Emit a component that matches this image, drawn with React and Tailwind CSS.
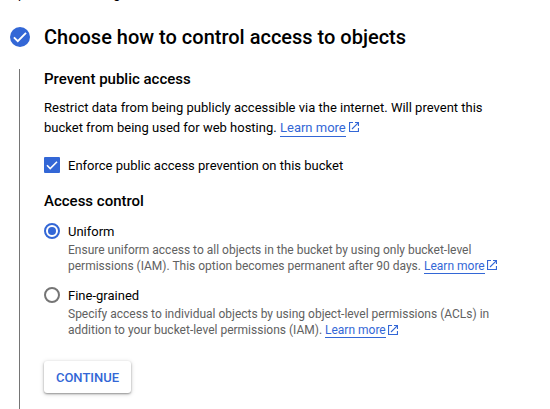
function OpenIcon({ className }) {
  return (
    <svg viewBox="0 0 10 10" className={`shrink-0 ${className}`} fill="none" stroke="#3367d6" strokeWidth="1.1">
      <path d="M4 .55H.55v8.9h8.9V6M6 .55h3.45V4M9.2.8 3 7" />
    </svg>
  );
}

function LearnMore({ className, iconClassName }) {
  return (
    <>
      <a className={`block border-b border-[#3367d6] text-[#3367d6] ${className}`}>Learn more</a>
      <OpenIcon className={iconClassName} />
    </>
  );
}

function Radio({ checked }) {
  return (
    <span className={`flex size-4 shrink-0 items-center justify-center rounded-full border-2 ${checked ? "border-[#3367d6]" : "border-[#757575]"}`}>
      {checked && <span className="size-2 rounded-full bg-[#3367d6]" />}
    </span>
  );
}

export default function App() {
  return (
    <div className="h-[409px] w-[550px] overflow-hidden bg-white font-['Roboto',sans-serif] text-[13px] whitespace-nowrap text-black">
      <div className="flex h-[26px] gap-[88px] overflow-hidden pl-[18px]">
        <span className="-mt-[14px] h-4 leading-4">p</span>
        <span className="-mt-[14px] h-4 leading-4">g</span>
      </div>
      <header className="flex h-[22px] items-center pl-[10px]">
        <svg viewBox="0 0 20 20" className="size-5">
          <circle cx="10" cy="10" r="10" fill="#3367d6" />
          <path d="m3.9 10.3 3.9 3.9 8.2-8.3" fill="none" stroke="white" strokeWidth="1.9" />
        </svg>
        <h1 className="ml-[14px] text-[20px] leading-[22px] font-medium">Choose how to control access to objects</h1>
      </header>
      <main className="mt-[21px] ml-[19px] h-[340px] border-l border-[#757575] pl-6">
        <h2 className="h-5 text-[15px] leading-5 font-medium">Prevent public access</h2>
        <p className="mt-[9px] h-5 leading-5">Restrict data from being publicly accessible via the internet. Will prevent this</p>
        <div className="flex h-5 items-start leading-5">
          <p className="w-[236px]">bucket from being used for web hosting.</p>
          <LearnMore className="h-[19px]" iconClassName="mt-[4px] ml-[3px] size-[10px]" />
        </div>
        <label className="mt-[17px] flex h-5 items-center gap-2">
          <span className="flex size-4 items-center justify-center rounded-[1px] bg-[#3367d6]">
            <svg viewBox="0 0 16 16" className="size-4" fill="none" stroke="white" strokeWidth="1.6">
              <path d="m3 8.3 3.2 3.2L13 4.7" />
            </svg>
          </span>
          <span className="mt-[2px] leading-5">Enforce public access prevention on this bucket</span>
        </label>
        <h2 className="mt-4 h-5 text-[15px] leading-5 font-medium">Access control</h2>
        <div className="mt-[10px]">
          <label className="flex h-5 items-center gap-2"><Radio checked /><span className="mt-[2px] leading-5">Uniform</span></label>
          <div className="mt-px h-8 pl-6 text-[12px] leading-4 text-[#616161]">
            <p>Ensure uniform access to all objects in the bucket by using only bucket-level</p>
            <div className="flex">
              <p className="w-[356px]">permissions (IAM). This option becomes permanent after 90 days.</p>
              <LearnMore className="h-4" iconClassName="mt-[2px] ml-[2px] size-[10px]" />
            </div>
          </div>
        </div>
        <div className="mt-[11px]">
          <label className="flex h-5 items-center gap-2"><Radio /><span className="mt-[2px] leading-5">Fine-grained</span></label>
          <div className="mt-px h-8 pl-6 text-[12px] leading-4 text-[#616161]">
            <p>Specify access to individual objects by using object-level permissions (ACLs) in</p>
            <div className="flex">
              <p className="w-[257px]">addition to your bucket-level permissions (IAM).</p>
              <LearnMore className="h-4" iconClassName="mt-[3px] ml-[2px] size-[10px]" />
            </div>
          </div>
        </div>
        <button className="mt-[23px] flex h-8 w-[87px] items-center justify-center rounded-[3px] bg-white pt-[2px] text-[13px] font-medium text-[#3367d6] shadow-[0_1px_2px_rgba(0,0,0,0.35),0_1px_5px_rgba(0,0,0,0.18)]">CONTINUE</button>
      </main>
    </div>
  );
}
